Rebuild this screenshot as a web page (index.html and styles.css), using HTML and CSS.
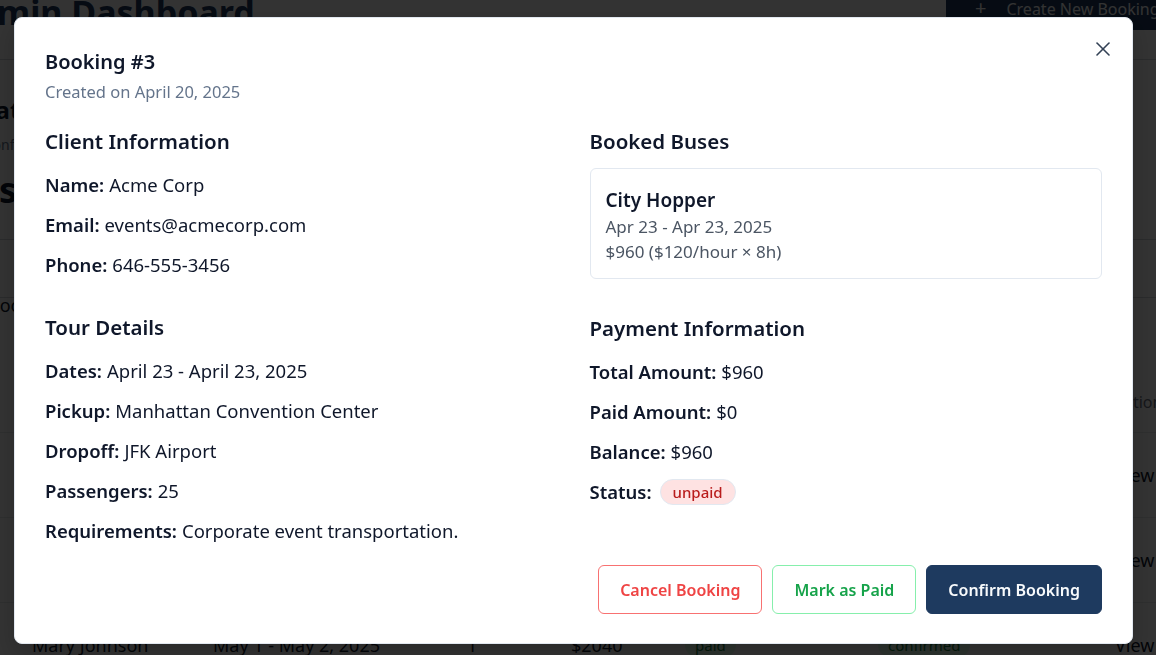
FILE: index.html
```html
<!DOCTYPE html>
<html lang="en">
<head>
<meta charset="utf-8">
<title>Admin Dashboard</title>
<link rel="stylesheet" href="styles.css">
</head>
<body>
<div class="dash">
  <header class="dash-header">
    <h1 class="dash-title">Admin Dashboard</h1>
    <button class="create-btn"><span class="plus">+</span>Create New Booking</button>
  </header>
  <section class="stats">
    <div class="stat-label">Data</div>
    <div class="stat-sub">Unconfirmed</div>
    <div class="stat-value">Rese</div>
  </section>
  <nav class="tabs"><span class="tab">Bookings</span></nav>
  <div class="table">
    <div class="trow thead">
      <span>Client</span><span>Dates</span><span>Buses</span><span>Amount</span><span>Payment</span><span>Status</span><span>Actions</span>
    </div>
    <div class="trow">
      <span>Acme Corp</span><span>Apr 23 - Apr 23, 2025</span><span>1</span><span>$960</span><span class="pill pill-red">unpaid</span><span class="pill pill-yellow">pending</span><span>View</span>
    </div>
    <div class="trow">
      <span>John Smith</span><span>Apr 28 - Apr 29, 2025</span><span>1</span><span>$1200</span><span class="pill pill-green">paid</span><span class="pill pill-green">confirmed</span><span>View</span>
    </div>
    <div class="trow">
      <span>Mary Johnson</span><span>May 1 - May 2, 2025</span><span>1</span><span>$2040</span><span class="pill pill-green">paid</span><span class="pill pill-green">confirmed</span><span>View</span>
    </div>
  </div>
</div>

<div class="overlay">
  <div class="modal">
    <button class="close" aria-label="Close">
      <svg width="24" height="24" viewBox="0 0 24 24" fill="none" stroke="currentColor" stroke-width="1.6" stroke-linecap="round"><path d="M18 6 6 18"/><path d="m6 6 12 12"/></svg>
    </button>
    <div class="modal-head">
      <h2 class="modal-title">Booking #3</h2>
      <p class="modal-sub">Created on April 20, 2025</p>
    </div>
    <div class="modal-grid">
      <div class="col">
        <section class="sec">
          <h3 class="sec-title">Client Information</h3>
          <p class="row"><b>Name:</b> Acme Corp</p>
          <p class="row"><b>Email:</b> events@acmecorp.com</p>
          <p class="row"><b>Phone:</b> 646-555-3456</p>
        </section>
        <section class="sec sec-tour">
          <h3 class="sec-title">Tour Details</h3>
          <p class="row"><b>Dates:</b> April 23 - April 23, 2025</p>
          <p class="row"><b>Pickup:</b> Manhattan Convention Center</p>
          <p class="row"><b>Dropoff:</b> JFK Airport</p>
          <p class="row"><b>Passengers:</b> 25</p>
          <p class="row"><b>Requirements:</b> Corporate event transportation.</p>
        </section>
      </div>
      <div class="col">
        <section class="sec">
          <h3 class="sec-title">Booked Buses</h3>
          <div class="bus-card">
            <div class="bus-name">City Hopper</div>
            <div class="bus-dates">Apr 23 - Apr 23, 2025</div>
            <div class="bus-price">$960 ($120/hour × 8h)</div>
          </div>
        </section>
        <section class="sec sec-pay">
          <h3 class="sec-title">Payment Information</h3>
          <p class="row"><b>Total Amount:</b> $960</p>
          <p class="row"><b>Paid Amount:</b> $0</p>
          <p class="row"><b>Balance:</b> $960</p>
          <p class="row"><b>Status:</b> <span class="badge">unpaid</span></p>
        </section>
      </div>
    </div>
    <div class="modal-foot">
      <button class="btn btn-cancel">Cancel Booking</button>
      <button class="btn btn-paid">Mark as Paid</button>
      <button class="btn btn-confirm">Confirm Booking</button>
    </div>
  </div>
</div>
</body>
</html>
```

FILE: styles.css
```css
* { box-sizing: border-box; }
html, body { height: 100%; }
body {
  margin: 0;
  overflow: hidden;
  background: #ffffff;
  font-family: "Noto Sans", "Open Sans", sans-serif;
  color: #0f172a;
}

/* background dashboard */
.dash { margin-top: -20px; }
.dash-header {
  display: flex;
  align-items: flex-start;
  height: 80px;
  border-bottom: 1px solid #d1d5db;
}
.dash-title {
  margin: 11px 0 0 -48px;
  font-size: 34px;
  line-height: 42px;
  font-weight: 700;
  color: #1e3a5f;
}
.create-btn {
  margin: 4px -40px 0 auto;
  width: 250px;
  height: 46px;
  flex-shrink: 0;
  border: 0;
  border-radius: 6px;
  background: #1e3a5f;
  color: #ffffff;
  font-family: inherit;
  font-size: 16px;
  text-align: left;
  padding-left: 29px;
}
.plus { margin-right: 20px; font-size: 20px; }
.stats {
  height: 180px;
  padding-top: 34px;
  margin-left: -22px;
  border-bottom: 1px solid #d1d5db;
}
.stat-label { font-size: 24px; font-weight: 700; line-height: 32px; }
.stat-sub { font-size: 14px; color: #64748b; line-height: 24px; margin: 7px 0 0 -11px; }
.stat-value { font-size: 36px; font-weight: 700; line-height: 48px; margin: 9px 0 0 -24px; }
.tabs {
  height: 58px;
  border-bottom: 1px solid #d1d5db;
  display: flex;
  align-items: flex-end;
  margin-left: -12px;
}
.tab { font-size: 18px; line-height: 28px; margin-bottom: -22px; }
.table { margin-top: 74px; }
.trow {
  display: grid;
  grid-template-columns: 181px 254px 104px 114px 193px 237px auto;
  padding-left: 32px;
  height: 85px;
  align-items: center;
  border-top: 1px solid #e5e7eb;
  font-size: 18px;
}
.thead { height: 60px; color: #6b7280; font-size: 16px; border-top: 0; }
.pill { justify-self: start; padding: 2px 10px; border-radius: 999px; font-size: 15px; }
.pill-red { background: #fee2e2; color: #b91c1c; }
.pill-yellow { background: #fef9c3; color: #a16207; }
.pill-green { background: #dcfce7; color: #15803d; }

/* overlay + modal */
.overlay {
  position: fixed;
  inset: 0;
  background: rgba(0, 0, 0, 0.8);
  display: flex;
  align-items: flex-start;
  padding: 17px 23px 0 14px;
}
.modal {
  position: relative;
  width: 1119px;
  background: #ffffff;
  border: 1px solid #e2e8f0;
  border-radius: 8px;
  padding: 30px 30px 29px;
  box-shadow: 0 10px 25px rgba(0, 0, 0, 0.2);
}
.close {
  position: absolute;
  top: 19px;
  right: 17px;
  width: 24px;
  height: 24px;
  padding: 0;
  border: 0;
  background: none;
  color: #334155;
  display: flex;
}
.modal-title {
  margin: 0;
  font-size: 20px;
  line-height: 28px;
  font-weight: 600;
  color: #0f172a;
}
.modal-sub {
  margin: 4px 0 0;
  font-size: 16.5px;
  line-height: 24px;
  color: #64748b;
}
.modal-grid {
  display: grid;
  grid-template-columns: 1fr 1fr;
  column-gap: 32px;
  margin-top: 23px;
}
.sec-title {
  margin: 0 0 13px;
  font-size: 20.5px;
  line-height: 28px;
  font-weight: 600;
  color: #0f172a;
}
.sec-tour { margin-top: 31px; }
.sec-pay { margin-top: 35px; }
.row {
  margin: 6px 0 0;
  font-size: 18.5px;
  line-height: 34px;
  color: #0f172a;
  display: flex;
  align-items: center;
  gap: 5px;
}
.sec-title + .row { margin-top: 0; }
.row b { font-weight: 600; }
.bus-card {
  border: 1px solid #e2e8f0;
  border-radius: 6px;
  padding: 17px 15px 14px;
}
.bus-name { font-size: 19px; line-height: 28px; font-weight: 600; }
.bus-dates { font-size: 17px; line-height: 26px; color: #4b5563; }
.bus-price { font-size: 17px; line-height: 24px; color: #4b5563; }
.badge {
  margin-left: 3px;
  display: inline-flex;
  align-items: center;
  height: 26px;
  padding: 0 12px;
  border-radius: 999px;
  background: #fee2e2;
  border: 1px solid #e2e8f0;
  color: #b91c1c;
  font-size: 15px;
  font-weight: 500;
}
.modal-foot {
  display: flex;
  justify-content: flex-end;
  gap: 10px;
  margin-top: 17px;
}
.btn {
  height: 49px;
  padding: 0 21px;
  border-radius: 6px;
  font-family: inherit;
  font-size: 16px;
  font-weight: 600;
  background: #ffffff;
}
.btn-cancel { border: 1px solid #f87171; color: #ef4444; }
.btn-paid { border: 1px solid #86efac; color: #16a34a; }
.btn-confirm { border: 1px solid #1e3a5f; background: #1e3a5f; color: #f8fafc; }
```
